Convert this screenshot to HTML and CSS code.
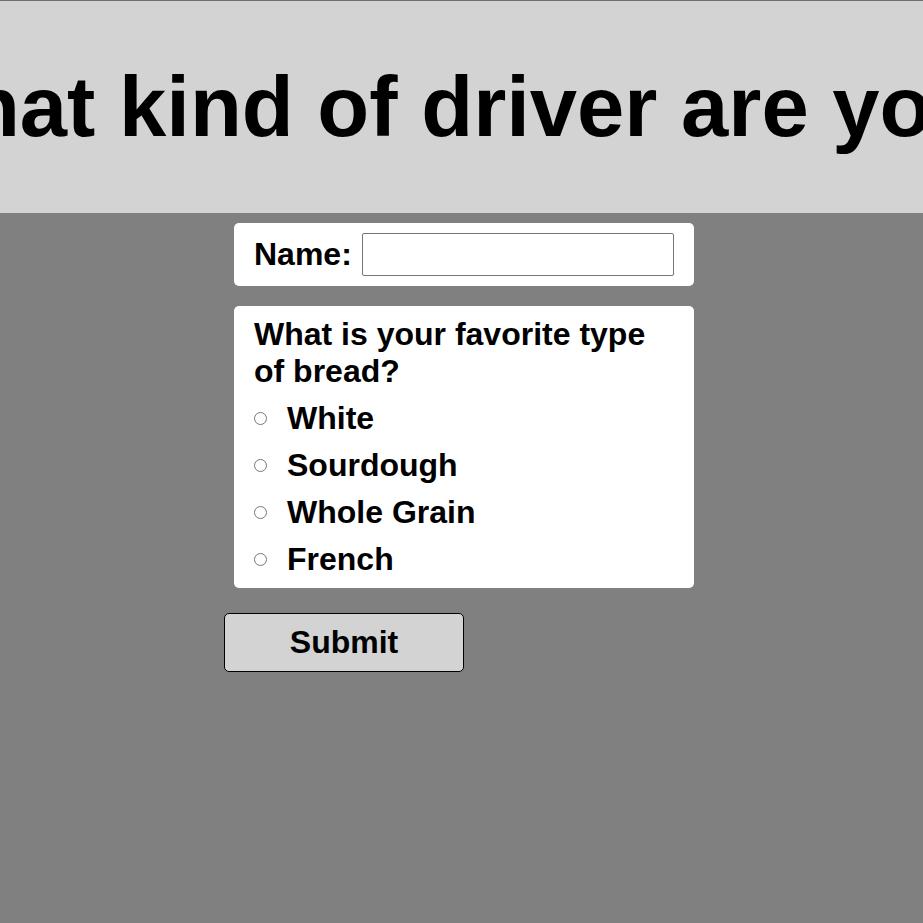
FILE: index.html
```html
<!DOCTYPE html>
<html lang="en">
<head>
<meta charset="utf-8">
<title>What kind of driver are you?</title>
<link rel="stylesheet" href="styles.css">
</head>
<body>
<header class="banner">
  <h1 class="title">What kind of driver are you?</h1>
</header>
<form class="quiz">
  <div class="card name-card">
    <label class="name-label" for="name">Name:</label>
    <input class="name-input" id="name" type="text">
  </div>
  <div class="card question-card">
    <div class="question">What is your favorite type of bread?</div>
    <label class="option"><input type="radio" name="bread" class="radio"><span>White</span></label>
    <label class="option"><input type="radio" name="bread" class="radio"><span>Sourdough</span></label>
    <label class="option"><input type="radio" name="bread" class="radio"><span>Whole Grain</span></label>
    <label class="option"><input type="radio" name="bread" class="radio"><span>French</span></label>
  </div>
  <button type="button" class="submit">Submit</button>
</form>
</body>
</html>
```

FILE: styles.css
```css
html, body {
  margin: 0;
  padding: 0;
}

body {
  background: #808080;
  font-family: "Liberation Sans", Arial, sans-serif;
  color: #000;
  min-height: 923px;
}

.banner {
  background: #d3d3d3;
  border-top: 1px solid #6e6e6e;
  display: flex;
  justify-content: center;
  overflow: hidden;
}

.title {
  font-size: 85px;
  font-weight: bold;
  line-height: normal;
  margin: 57px 0;
  white-space: nowrap;
  flex: none;
}

.quiz {
  display: flex;
  flex-direction: column;
  align-items: flex-start;
  width: 480px;
  margin-left: 224px;
  padding-top: 10px;
}

.card {
  background: #fff;
  border-radius: 5px;
  width: 460px;
  box-sizing: border-box;
  margin-left: 10px;
  padding: 10px 20px;
  font-size: 32px;
  font-weight: bold;
}

.name-card {
  display: flex;
  align-items: center;
  gap: 10px;
}

.name-input {
  flex: 1;
  min-width: 0;
  height: 43px;
  box-sizing: border-box;
  border: 1px solid #767676;
  border-radius: 2px;
  margin: 0;
  font-size: 20px;
}

.question-card {
  margin-top: 20px;
  display: flex;
  flex-direction: column;
  gap: 10px;
}

.option {
  display: flex;
  align-items: center;
  gap: 20px;
}

.radio {
  margin: 0;
  width: 13px;
  height: 13px;
  flex: none;
}

.submit {
  margin-top: 25px;
  width: 240px;
  height: 59px;
  background: #d3d3d3;
  border: 1px solid #000;
  border-radius: 5px;
  font-family: "Liberation Sans", Arial, sans-serif;
  font-size: 32px;
  font-weight: bold;
  color: #000;
  padding: 0;
}
```
